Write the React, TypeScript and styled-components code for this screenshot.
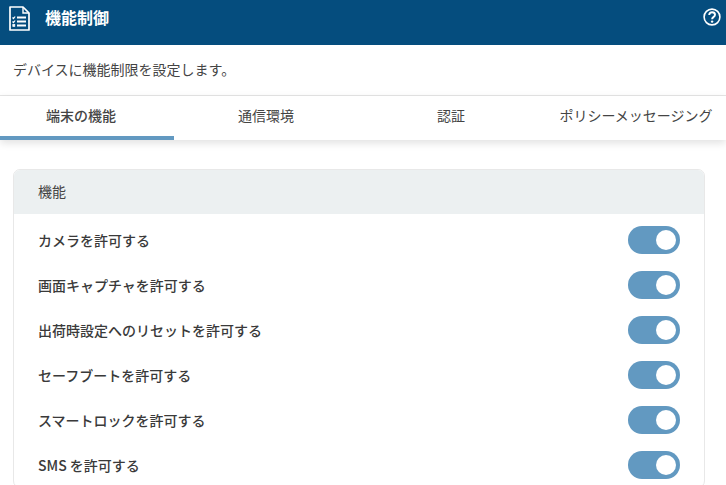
import React from "react";
import styled, { createGlobalStyle } from "styled-components";

const GlobalStyle = createGlobalStyle`
  html, body {
    margin: 0;
    padding: 0;
    height: 100%;
    overflow: hidden;
    background: #fff;
  }
`;

const Page = styled.div`
  width: 726px;
  height: 485px;
  overflow: hidden;
  font-family: "Noto Sans CJK JP", "Noto Sans", sans-serif;
  color: #333;
`;

const TitleBar = styled.header`
  height: 45px;
  box-sizing: border-box;
  background: #054d7e;
  display: flex;
  align-items: flex-start;
  padding: 6px 5px 0 9px;
  color: #fff;
`;

const TitleText = styled.h1`
  margin: 0 0 0 15px;
  font-size: 16px;
  line-height: 23px;
  font-weight: 700;
  flex: 1;
`;

const HelpButton = styled.div`
  margin-top: 2px;
  display: flex;
`;

const Description = styled.p`
  margin: 0;
  height: 51px;
  box-sizing: border-box;
  padding: 15px 0 0 13px;
  font-size: 14px;
  line-height: 19px;
  color: #444;
  border-bottom: 1px solid #e6e6e6;
`;

const TabBar = styled.div`
  height: 44px;
  overflow: hidden;
  box-shadow: 0 3px 8px rgba(0, 0, 0, 0.12);
  position: relative;
`;

const Tabs = styled.nav`
  display: grid;
  grid-template-columns: repeat(4, 185px);
  margin-left: -11.5px;
`;

const Tab = styled.div<{ $active?: boolean }>`
  display: flex;
  align-items: center;
  justify-content: center;
  box-sizing: border-box;
  height: 44px;
  padding-bottom: 3px;
  font-size: 14px;
  white-space: nowrap;
  color: #444;
  font-weight: ${(p) => (p.$active ? 500 : 400)};
  border-bottom: 4px solid ${(p) => (p.$active ? "#6299c1" : "transparent")};
`;

const Content = styled.main`
  padding: 29px 21px 0 13px;
`;

const Panel = styled.section`
  border: 1px solid #e8e8e8;
  border-radius: 7px;
  overflow: hidden;
`;

const PanelHeader = styled.div`
  height: 44px;
  box-sizing: border-box;
  padding: 0 0 2px 24px;
  background: #ecf0f1;
  display: flex;
  align-items: center;
  font-size: 14px;
  color: #444;
`;

const PanelBody = styled.div`
  padding-top: 3px;
`;

const Row = styled.div`
  height: 45px;
  display: flex;
  align-items: center;
  justify-content: space-between;
  padding: 0 24px;
`;

const RowLabel = styled.span`
  font-size: 14px;
  font-weight: 500;
  color: #3a3a3a;
`;

const Toggle = styled.span`
  width: 52px;
  height: 28px;
  box-sizing: border-box;
  padding: 4px;
  border-radius: 14px;
  background: #6299c1;
  display: flex;
  justify-content: flex-end;
`;

const Knob = styled.span`
  width: 20px;
  height: 20px;
  border-radius: 50%;
  background: #fff;
`;

const items = [
  "カメラを許可する",
  "画面キャプチャを許可する",
  "出荷時設定へのリセットを許可する",
  "セーフブートを許可する",
  "スマートロックを許可する",
  "SMS を許可する",
];

const tabs = ["端末の機能", "通信環境", "認証", "ポリシーメッセージング"];

function DocIcon() {
  return (
    <svg width="21" height="25" viewBox="0 0 21 25" fill="none" stroke="#fff">
      <path d="M1 1h13l6 6v17H1z" strokeWidth="1.7" strokeLinejoin="round" />
      <path d="M14 1v6h6" strokeWidth="1.4" />
      <path d="M8 11.5h9M8 15.5h9M8 19.5h9" strokeWidth="1.8" />
      <path d="M3.5 11.5l1 1 1.6-2M3.5 15.5l1 1 1.6-2" strokeWidth="1.2" />
      <rect x="3.8" y="18.5" width="2" height="2" fill="#fff" strokeWidth="0.7" />
    </svg>
  );
}

function HelpIcon() {
  return (
    <svg width="18" height="18" viewBox="0 0 18 18" fill="none" stroke="#fff">
      <circle cx="9" cy="9" r="7.9" strokeWidth="1.6" />
      <path
        d="M6.2 7c0-1.7 1.2-2.8 2.9-2.8S12 5.2 12 6.7c0 1.2-.7 1.8-1.6 2.4-.9.6-1.3 1.1-1.3 2.2"
        strokeWidth="1.9"
      />
      <circle cx="9.1" cy="13.6" r="1.2" fill="#fff" stroke="none" />
    </svg>
  );
}

export default function App() {
  return (
    <Page>
      <GlobalStyle />
      <TitleBar>
        <DocIcon />
        <TitleText>機能制御</TitleText>
        <HelpButton>
          <HelpIcon />
        </HelpButton>
      </TitleBar>
      <Description>デバイスに機能制限を設定します。</Description>
      <TabBar>
        <Tabs>
          {tabs.map((tab, index) => (
            <Tab key={tab} $active={index === 0}>
              {tab}
            </Tab>
          ))}
        </Tabs>
      </TabBar>
      <Content>
        <Panel>
          <PanelHeader>機能</PanelHeader>
          <PanelBody>
            {items.map((item) => (
              <Row key={item}>
                <RowLabel>{item}</RowLabel>
                <Toggle>
                  <Knob />
                </Toggle>
              </Row>
            ))}
          </PanelBody>
        </Panel>
      </Content>
    </Page>
  );
}
